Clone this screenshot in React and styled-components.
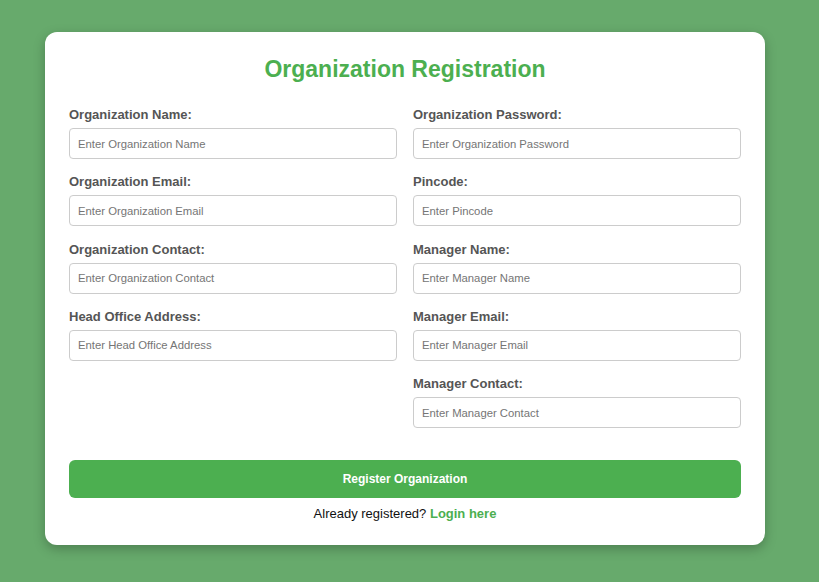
import React from 'react';
import styled, { createGlobalStyle } from 'styled-components';

const GlobalStyle = createGlobalStyle`
    html, body {
        margin: 0;
        padding: 0;
        background: #67aa6c;
        font-family: "Liberation Sans", Arial, sans-serif;
    }
    * {
        box-sizing: border-box;
    }
`;

const Page = styled.div`
    min-height: 582px;
    padding: 32px 0 37px 45px;
`;

const Card = styled.div`
    width: 720px;
    background: #ffffff;
    border-radius: 12px;
    padding: 24px 24px 23px;
    box-shadow: 0 4px 12px rgba(0, 0, 0, 0.25);
`;

const Title = styled.h2`
    margin: 0 0 24px;
    text-align: center;
    font-size: 23px;
    font-weight: bold;
    color: #4caf50;
    line-height: 27px;
`;

const Grid = styled.div`
    display: grid;
    grid-template-columns: 1fr 1fr;
    column-gap: 16px;
    align-items: start;
`;

const Column = styled.div`
    display: flex;
    flex-direction: column;
`;

const Field = styled.div`
    display: flex;
    flex-direction: column;
    margin-bottom: 15.3px;
`;

const Label = styled.label`
    font-size: 13px;
    font-weight: bold;
    color: #555555;
    line-height: 16px;
    margin-bottom: 5px;
`;

const Input = styled.input`
    height: 31px;
    padding: 0 8px;
    border: 1px solid #cccccc;
    border-radius: 4px;
    font-family: "Liberation Sans", Arial, sans-serif;
    font-size: 11.3px;
    color: #333;
    outline: none;
    &::placeholder {
        color: #757575;
    }
`;

const Button = styled.button`
    width: 100%;
    height: 38px;
    margin-top: 17px;
    border: none;
    border-radius: 6px;
    background: #4caf50;
    color: #ffffff;
    font-family: "Liberation Sans", Arial, sans-serif;
    font-size: 12px;
    font-weight: bold;
    cursor: pointer;
`;

const Footer = styled.p`
    margin: 8px 0 0;
    text-align: center;
    font-size: 13px;
    color: #111;
    line-height: 16px;
`;

const LoginLink = styled.a`
    color: #4caf50;
    font-weight: bold;
    text-decoration: none;
`;

const left = [
    ['Organization Name:', 'Enter Organization Name'],
    ['Organization Email:', 'Enter Organization Email'],
    ['Organization Contact:', 'Enter Organization Contact'],
    ['Head Office Address:', 'Enter Head Office Address'],
];

const right = [
    ['Organization Password:', 'Enter Organization Password'],
    ['Pincode:', 'Enter Pincode'],
    ['Manager Name:', 'Enter Manager Name'],
    ['Manager Email:', 'Enter Manager Email'],
    ['Manager Contact:', 'Enter Manager Contact'],
];

const renderFields = (fields) => fields.map(([label, placeholder]) => (
    <Field key={label}>
        <Label>{label}</Label>
        <Input placeholder={placeholder} type={label.includes('Password') ? 'password' : 'text'} />
    </Field>
));

const App = () => {
    return (
        <Page>
            <GlobalStyle />
            <Card>
                <Title>Organization Registration</Title>
                <Grid>
                    <Column>{renderFields(left)}</Column>
                    <Column>{renderFields(right)}</Column>
                </Grid>
                <Button>Register Organization</Button>
                <Footer>
                    Already registered? <LoginLink href="#">Login here</LoginLink>
                </Footer>
            </Card>
        </Page>
    );
}

export default App;
